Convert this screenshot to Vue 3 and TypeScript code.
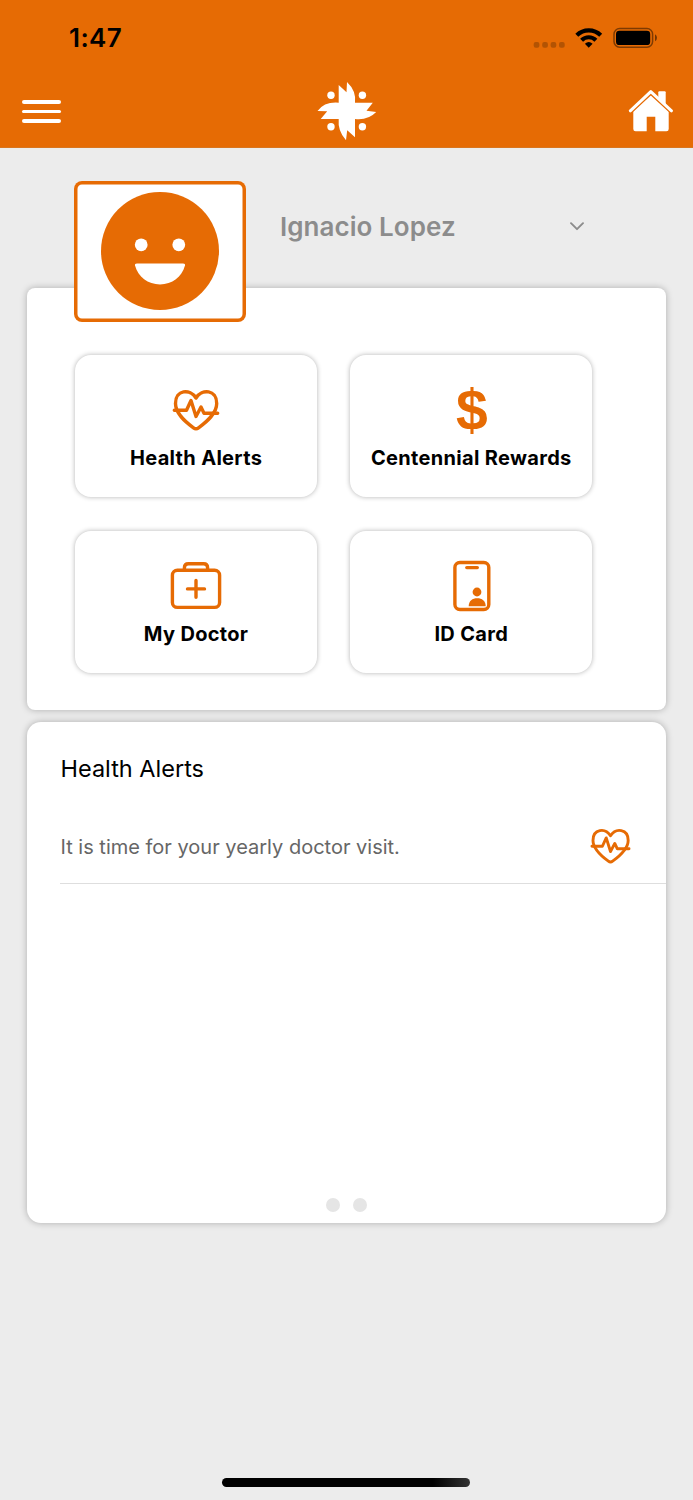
<script setup lang="ts">
interface Tile {
  id: 'heart' | 'dollar' | 'bag' | 'card'
  label: string
}

const tiles: Tile[] = [
  { id: 'heart', label: 'Health Alerts' },
  { id: 'dollar', label: 'Centennial Rewards' },
  { id: 'bag', label: 'My Doctor' },
  { id: 'card', label: 'ID Card' },
]
</script>

<template>
  <div class="screen">
    <header class="header">
      <div class="status">
        <span class="time">1:47</span>
        <svg class="status-icons" width="126" height="26" viewBox="533 25 126 26">
          <g opacity="0.22">
            <rect x="533.7" y="42" width="5.7" height="5.7" rx="2" />
            <rect x="542.2" y="42" width="5.7" height="5.7" rx="2" />
            <rect x="550.6" y="42" width="5.7" height="5.7" rx="2" />
            <rect x="559" y="42" width="5.7" height="5.7" rx="2" />
          </g>
          <g fill="none" stroke="#000" stroke-width="4.2">
            <path d="M576.8 35.2A17 17 0 0 1 600.7 35.2" />
            <path d="M581.6 40.2A10.2 10.2 0 0 1 595.9 40.2" />
          </g>
          <path d="M584.9 43.7Q588.7 40.4 592.6 43.7L588.7 47.7Z" />
          <rect x="614" y="28.6" width="38.6" height="18.6" rx="5.6" fill="none" stroke="#000" stroke-opacity="0.45" stroke-width="1.5" />
          <rect x="616" y="30.7" width="34.2" height="14.4" rx="3.4" />
          <path d="M655 34.3Q657 35.3 657 37.8T655 41.2Z" opacity="0.5" />
        </svg>
      </div>
      <nav class="nav">
        <button class="menu" aria-label="Menu"><i /><i /><i /></button>
        <svg class="logo" width="60" height="60" viewBox="317 81 60 60" fill="#fff">
          <path d="M338.7 85L346.5 92.3L347 82Q356.5 91 355 102.7H372.8L366.5 110.8L376.2 112Q368 120.5 355 119V137.2L347.2 130.2L346 140.2Q337.5 131 338.7 119H320.7L327.2 111.2L317.5 111Q324.5 101.5 338.7 102.7Z" />
          <circle cx="331" cy="95.3" r="3.7" />
          <circle cx="362.4" cy="95.3" r="3.7" />
          <circle cx="331" cy="126.8" r="3.7" />
          <circle cx="362.4" cy="126.8" r="3.7" />
        </svg>
        <svg class="home" width="46" height="44" viewBox="628 89 46 44" fill="#fff">
          <path d="M650.8 94.6L668.7 111.2V129Q668.7 131.3 666.4 131.3H655.3V116.7H646.7V131.3H635.6Q633.3 131.3 633.3 129V111.2Z" />
          <path d="M630.3 110.8L650.8 91.6L671.5 110.8" fill="none" stroke="#e66b04" stroke-width="5.6" stroke-linejoin="round" />
          <path d="M658.3 98.6V92.3Q658.3 91.3 659.3 91.3H664.7Q665.7 91.3 665.7 92.3V105.4Z" />
          <path d="M630.3 110.8L650.8 91.6L671.5 110.8" fill="none" stroke="#fff" stroke-width="3" stroke-linecap="round" stroke-linejoin="round" />
        </svg>
      </nav>
    </header>

    <main>
      <section class="profile">
        <div class="avatar">
          <svg width="118" height="118" viewBox="0 0 118 118">
            <circle cx="59" cy="59" r="59" fill="#e66b04" />
            <g fill="#fff">
              <circle cx="40.2" cy="52.8" r="6.4" />
              <circle cx="77.8" cy="52.8" r="6.4" />
              <path d="M36 71.4H82Q84.5 71.4 84 73.6C81 85 71 92.5 59 92.5S37 85 34 73.6Q33.5 71.4 36 71.4Z" />
            </g>
          </svg>
        </div>
        <span class="name">Ignacio Lopez</span>
        <svg class="chevron" width="14" height="9" viewBox="0 0 14 9">
          <path d="M1 1.2L7 7.2L13 1.2" fill="none" stroke="#8c8c8c" stroke-width="1.9" stroke-linecap="round" stroke-linejoin="round" />
        </svg>
      </section>

      <section class="panel actions">
        <button v-for="tile in tiles" :key="tile.id" class="tile">
          <span class="icon">
            <svg v-if="tile.id === 'heart'" class="line" width="48" height="42" viewBox="172 389 48 42">
              <path d="M196 398C190 388.5 175.5 389.5 175.5 403.5C175.5 413.5 185 421.5 193.5 427.8Q196 429.8 198.5 427.8C207 421.5 216.7 413.5 216.7 403.5C216.7 389.5 202 388.5 196 398Z" />
              <path d="M174.3 410.3H186.5L191 400.5L196 416.5L201 407L204 413.3H217.7" />
            </svg>
            <span v-else-if="tile.id === 'dollar'" class="dollar">$</span>
            <svg v-else-if="tile.id === 'bag'" class="line" width="52" height="50" viewBox="170 561.3 52 50">
              <rect x="172.4" y="570.5" width="47.2" height="37.2" rx="5" />
              <path d="M184.4 570V568Q184.4 564 188.4 564H203.6Q207.6 564 207.6 568V570M196 580.7V597.5M187.5 589.2H204.5" />
            </svg>
            <svg v-else class="line" width="39" height="52" viewBox="452 560 39 52">
              <rect x="454.9" y="562.5" width="33.9" height="47" rx="5" />
              <path d="M466.8 567.6H477.3" />
              <g class="solid">
                <circle cx="477" cy="592" r="4.4" />
                <path d="M468.7 606.2C468.7 600.8 472.5 598.3 477.2 598.3S485.7 600.8 485.7 606.2Z" />
              </g>
            </svg>
          </span>
          <span class="label">{{ tile.label }}</span>
        </button>
      </section>

      <section class="panel alerts">
        <h2>Health Alerts</h2>
        <div class="alert">
          <span>It is time for your yearly doctor visit.</span>
          <svg class="line" width="41" height="36" viewBox="172 389 48 42">
            <path d="M196 398C190 388.5 175.5 389.5 175.5 403.5C175.5 413.5 185 421.5 193.5 427.8Q196 429.8 198.5 427.8C207 421.5 216.7 413.5 216.7 403.5C216.7 389.5 202 388.5 196 398Z" />
            <path d="M174.3 410.3H186.5L191 400.5L196 416.5L201 407L204 413.3H217.7" />
          </svg>
        </div>
        <div class="pager"><i /><i /></div>
      </section>
    </main>
    <div class="home-indicator" />
  </div>
</template>

<style>
body {
  background: #ececec;
}
</style>

<style scoped>
* {
  box-sizing: border-box;
}
.screen {
  width: 693px;
  height: 1500px;
  display: flex;
  flex-direction: column;
  overflow: hidden;
  background: #ececec;
  font-family: Inter, "Liberation Sans", sans-serif;
}
button {
  padding: 0;
  border: 0;
  background: none;
  font-family: inherit;
}
svg {
  display: block;
  flex: none;
}
.header {
  height: 148px;
  background: #e66b04;
  border-bottom: 1px solid #d9761f;
}
.status {
  height: 76px;
  padding: 0 34px 0 69px;
  display: flex;
  align-items: center;
  justify-content: space-between;
}
.time {
  font-size: 26px;
  font-weight: 600;
  line-height: 32px;
  letter-spacing: 0.4px;
}
.nav {
  height: 71px;
  padding: 0 19px 0 22px;
  display: grid;
  grid-template-columns: 46px 1fr 46px;
  align-items: center;
}
.menu {
  width: 39px;
  display: flex;
  flex-direction: column;
  gap: 6px;
}
.menu i {
  height: 3.7px;
  border-radius: 2px;
  background: #fff;
}
.logo {
  justify-self: center;
  margin: 0 3px 2px 0;
}
.home {
  margin-bottom: 1px;
}
.profile {
  height: 140px;
  padding: 33px 109px 0 74px;
  display: flex;
  align-items: flex-start;
}
.avatar {
  position: relative;
  z-index: 1;
  flex: none;
  width: 172px;
  height: 140.5px;
  padding-top: 11px;
  border-radius: 8px;
  background: #fff;
  box-shadow: inset 0 0 0 3.5px #e66b04;
  display: flex;
  align-items: flex-start;
  justify-content: center;
}
.name {
  margin: 30px 0 0 34px;
  flex: 1;
  color: #8c8c8c;
  font-size: 26px;
  font-weight: 600;
  line-height: 32px;
  letter-spacing: 0.05px;
  white-space: nowrap;
}
.chevron {
  margin-top: 41px;
}
.panel {
  width: 639.5px;
  margin-left: 26.5px;
  background: #fff;
  box-shadow: 0 0 7px rgba(0, 0, 0, 0.27);
}
.actions {
  height: 422px;
  border-radius: 8px;
  padding: 67px 0 0 48.6px;
  display: grid;
  grid-template-columns: 242px 242px;
  grid-template-rows: 142px 142px;
  gap: 34px 33.2px;
}
.tile {
  border-radius: 16px;
  background: #fff;
  box-shadow: 0 0 5px rgba(0, 0, 0, 0.3);
  display: flex;
  flex-direction: column;
  align-items: center;
}
.icon {
  height: 54px;
  margin-top: 28px;
  display: flex;
  align-items: center;
  justify-content: center;
}
.line {
  fill: none;
  stroke: #e66b04;
  stroke-width: 3.4;
  stroke-linecap: round;
  stroke-linejoin: round;
}
.solid {
  fill: #e66b04;
  stroke: none;
}
.dollar {
  padding-left: 1px;
  color: #e66b04;
  font: 700 57px/54px "Liberation Sans", Arial, sans-serif;
}
.label {
  margin-top: 8px;
  color: #000;
  font-size: 20px;
  font-weight: 650;
  line-height: 26px;
  letter-spacing: 0.32px;
  white-space: nowrap;
}
.alerts {
  height: 501px;
  margin-top: 11.5px;
  border-radius: 14px;
  padding-left: 33.5px;
  display: flex;
  flex-direction: column;
}
h2 {
  margin: 32px 0 0 0.5px;
  font-size: 23.5px;
  font-weight: 400;
  line-height: 30px;
}
.alert {
  height: 75px;
  margin-top: 25px;
  padding: 0 35.4px 0 0.5px;
  border-bottom: 1px solid #dedede;
  display: flex;
  align-items: center;
  justify-content: space-between;
  color: #666;
  font-size: 20px;
}
.alert span {
  padding-top: 2px;
}
.pager {
  margin: auto 0 11px -33.5px;
  padding-left: 1px;
  display: flex;
  justify-content: center;
  gap: 13px;
}
.pager i {
  width: 14px;
  height: 14px;
  border-radius: 50%;
  background: #e5e5e5;
}
.home-indicator {
  width: 248px;
  height: 8.5px;
  margin: auto auto 13.5px 222.4px;
  border-radius: 5px;
  background: linear-gradient(90deg, #000 85%, #333);
}
</style>
